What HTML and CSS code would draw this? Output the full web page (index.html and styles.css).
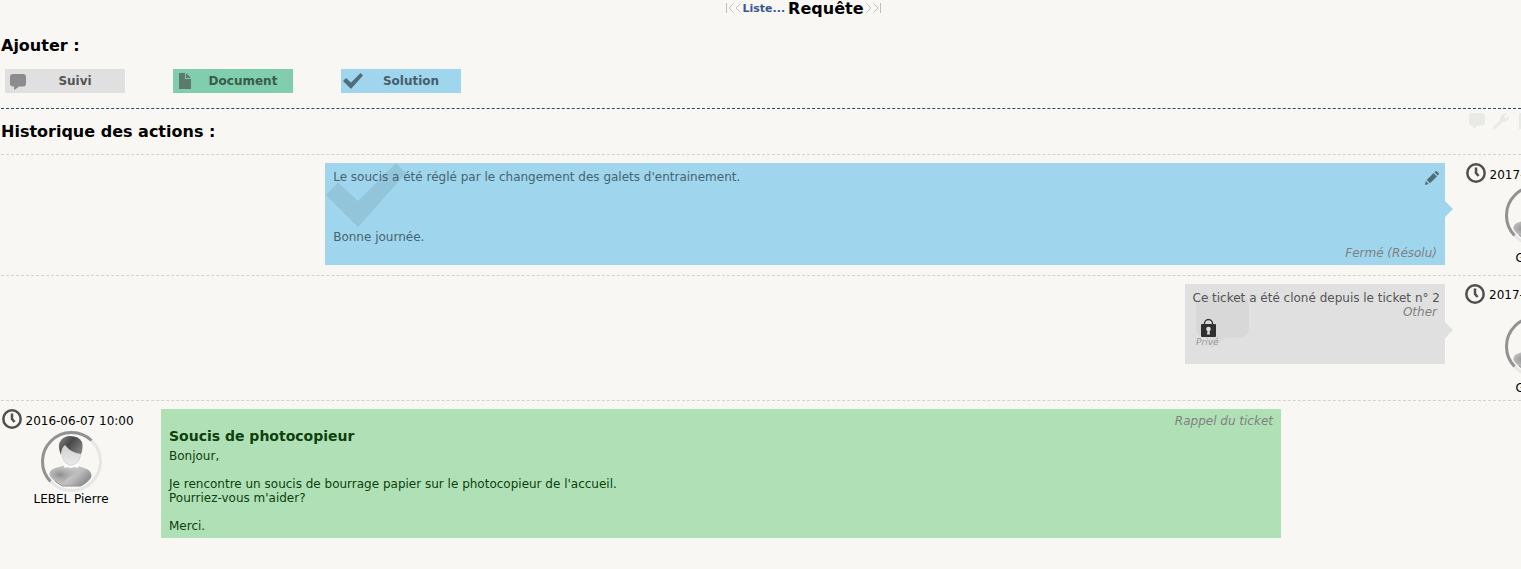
FILE: index.html
```html
<!DOCTYPE html>
<html lang="fr">
<head>
<meta charset="utf-8">
<title>Requête</title>
<link rel="stylesheet" href="styles.css">
</head>
<body>
<svg class="defs" width="0" height="0">
  <defs>
    <linearGradient id="body" x1="0" y1="0" x2="1" y2=".5"><stop offset="0" stop-color="#c8c8c8"/><stop offset=".35" stop-color="#dadada"/><stop offset=".75" stop-color="#b8b8b8"/><stop offset="1" stop-color="#909090"/></linearGradient>
    <linearGradient id="hair" x1="0" x2="1" y2=".6"><stop offset="0" stop-color="#8a8a8a"/><stop offset=".5" stop-color="#484848"/><stop offset="1" stop-color="#7c7c7c"/></linearGradient>
    <radialGradient id="shoulder" cx=".3" cy=".45" r=".7"><stop offset="0" stop-color="#8c8c8c"/><stop offset="1" stop-color="#c4c4c4" stop-opacity="0"/></radialGradient>
    <linearGradient id="face" x2="0" y2="1"><stop offset="0" stop-color="#cfcfcf"/><stop offset="1" stop-color="#ebebeb"/></linearGradient>
    <symbol id="clock" viewBox="0 0 20 20"><circle cx="10" cy="10" r="8.7" fill="none" stroke="#505050" stroke-width="2.5"/><path d="M10 4.500V10l2.600 3" fill="none" stroke="#505050" stroke-width="2.500"/></symbol>
    <symbol id="bubble" viewBox="0 0 16 16"><path d="M3 0h10q3 0 3 3v6.500q0 3-3 3H9L5 15.500q-1 .5-1-.8v-2.200H3q-3 0-3-3V3q0-3 3-3z"/></symbol>
    <symbol id="check" viewBox="0 0 80 64"><path d="M0 32 12 19.500 32 38 70 0l10 10L32 64z"/></symbol>
    <symbol id="file" viewBox="0 0 12 16"><path d="M0 0h6v6h6v10H0z"/><path d="M7 0l5 5H7z"/></symbol>
    <symbol id="avatar" viewBox="0 0 61 61">
      <circle cx="30.500" cy="30.500" r="29" fill="none" stroke="#e6e6e6" stroke-width="3"/>
      <path d="M50.500 9.500A29 29 0 0 0 9.500 50.500" fill="none" stroke="#929292" stroke-width="3"/>
      <path d="M23 34.500 13 37.500q-5 2-4.500 6.500 3 6 13 11h18q9-4 11-9.500 0-6-6-8L36 34.500z" fill="url(#body)"/>
      <path d="M13 37.500q-5 2-4.500 6.500 3 6 13 11 3-10 18-14l4-4-8-2.500H23z" fill="url(#shoulder)"/>
      <path d="M14 50q4 3 7.500 5h18q3-1.300 5-3" fill="none" stroke="#909090"/>
      <path d="M23 34l2-2h10l3 2-1 3-3.500-1-3.500 1-3.500-1-3 1z" fill="#fff"/>
      <path d="M20 15q8-4 20 3 1 15-11 16.500Q20 32 20 15z" fill="url(#face)" stroke="#c4c4c4" stroke-width=".6"/>
      <path d="M20 24q-4.500-10 .5-15.500Q24 5 29 5q9 0 12 6 1.500 6-1 12-10-1-16-9-4 3-4 10z" fill="url(#hair)"/>
    </symbol>
  </defs>
</svg>

<header class="pager">
  <svg class="pager-prev" width="16" height="10" viewBox="0 0 16 10"><path d="M.5 0v10M7.500.5 3 5l4.500 4.500M14.500.5 10 5l4.500 4.500"/></svg>
  <a class="pager-list">Liste...</a>
  <span class="pager-title">Requête</span>
  <svg class="pager-next" width="16" height="10" viewBox="0 0 16 10"><path d="M15.500 0v10M1.500.5 6 5 1.500 9.500M8.500.5 13 5 8.500 9.500"/></svg>
</header>

<section class="add">
  <h2 class="heading">Ajouter :</h2>
  <div class="buttons">
    <div class="btn btn-grey"><svg class="btn-icon" width="16" height="16"><use href="#bubble"/></svg><span class="btn-label">Suivi</span></div>
    <div class="btn btn-green"><svg class="btn-icon" width="16" height="16"><use href="#file"/></svg><span class="btn-label">Document</span></div>
    <div class="btn btn-blue"><svg class="btn-icon btn-check" width="20" height="16"><use href="#check"/></svg><span class="btn-label">Solution</span></div>
  </div>
</section>

<section class="history">
  <div class="history-head">
    <h2 class="heading">Historique des actions :</h2>
    <div class="filters">
      <svg width="16" height="16"><use href="#bubble"/></svg>
      <svg width="16" height="16" viewBox="0 0 16 16"><path d="M.5 13.500 7.500 6.500Q7 1.500 11 .3q1.500-.5 3 .2L11 3.500l.5 1.500 1.500.5 3-2.500q.5 3-2 5-2 1.500-4.500.8L2.500 15.800Q-.5 16 .5 13.500z"/></svg>
      <svg class="filter-file" width="12" height="16"><use href="#file"/></svg>
    </div>
  </div>

  <div class="row row-solution">
    <article class="card card-blue">
      <svg class="card-mark" width="80" height="64"><use href="#check"/></svg>
      <p class="line">Le soucis a été réglé par le changement des galets d'entrainement.</p>
      <p class="line signoff">Bonne journée.</p>
      <svg class="edit" width="14" height="14" viewBox="0 0 14 14"><path d="M0 14l.8-4L3.700 13zM1.700 9 8.600 2.100l3.300 3.300L5 12.300zM9.500 1.300l1-1q.8-.5 1.500.1L13.700 2q.5.8 0 1.500l-1 1z"/></svg>
      <span class="status">Fermé (Résolu)</span>
    </article>
    <aside class="who who-right">
      <div class="date"><svg width="20" height="20"><use href="#clock"/></svg><span>2017-</span></div>
      <svg class="avatar" width="61" height="61"><use href="#avatar"/></svg>
      <span class="name">G</span>
    </aside>
  </div>

  <div class="row row-followup">
    <article class="card card-grey">
      <svg class="bubble-mark" width="53" height="53"><use href="#bubble"/></svg>
      <p class="line">Ce ticket a été cloné depuis le ticket n° 2</p>
      <span class="origin">Other</span>
      <div class="private">
        <svg width="15" height="18" viewBox="0 0 15 18"><path d="M3.500 6V4.500a4 4 0 0 1 8 0V6" fill="none" stroke="#303030" stroke-width="1.300"/><rect y="5" width="15" height="13" rx="1" fill="#303030"/><circle cx="7.500" cy="10" r="2.300" fill="#e0e0e0"/><path d="M6.800 10h1.400l.8 5.500H6z" fill="#e0e0e0"/></svg>
        <span>Privé</span>
      </div>
    </article>
    <aside class="who who-right">
      <div class="date"><svg width="20" height="20"><use href="#clock"/></svg><span>2017-</span></div>
      <svg class="avatar" width="61" height="61"><use href="#avatar"/></svg>
      <span class="name">G</span>
    </aside>
  </div>

  <div class="row row-ticket">
    <aside class="who">
      <div class="date"><svg width="20" height="20"><use href="#clock"/></svg><span>2016-06-07 10:00</span></div>
      <svg class="avatar" width="61" height="61"><use href="#avatar"/></svg>
      <span class="name">LEBEL Pierre</span>
    </aside>
    <article class="card card-green">
      <span class="reminder">Rappel du ticket</span>
      <h3 class="subject">Soucis de photocopieur</h3>
      <p class="message">Bonjour,<br><br>Je rencontre un soucis de bourrage papier sur le photocopieur de l'accueil.<br>Pourriez-vous m'aider?<br><br>Merci.</p>
    </article>
  </div>
</section>
</body>
</html>
```

FILE: styles.css
```css
* { box-sizing: border-box; }
html { overflow: hidden; }
body {
  margin: 0;
  height: 569px;
  overflow: hidden;
  background: #f8f7f3;
  color: #000;
  font: 12px/14px "DejaVu Sans", sans-serif;
}
svg { display: block; flex: none; }
h2, h3, p { margin: 0; }
.defs { position: absolute; }

.pager {
  display: flex;
  justify-content: center;
  align-items: center;
  height: 17px;
  padding-left: 86px;
}
.pager svg { margin-top: -1px; fill: none; stroke: #c0c0c0; }
.pager-list { margin-left: 1px; color: #3a5693; font-size: 11px; font-weight: bold; }
.pager-title { margin: 0 2px 0 3px; font-size: 16px; font-weight: bold; line-height: 17px; }

.heading { font-size: 16px; line-height: 18px; font-weight: bold; }
.add {
  height: 92px;
  margin-left: 1px;
  padding-top: 20px;
  border-bottom: 1px dashed #2d4a70;
}
.buttons { display: flex; gap: 48px; padding: 14px 0 0 4px; }
.btn {
  display: flex;
  align-items: center;
  width: 120px;
  height: 24px;
  font-weight: bold;
}
.btn-icon { margin-left: 5px; fill: #8c8c8c; }
.btn-check { margin-right: -1px; }
.btn-blue .btn-check { margin-left: 2px; }
.btn-label { flex: 1; padding-right: 1px; text-align: center; }
.btn-grey { background: #e0e0e0; color: #545454; }
.btn-grey .btn-icon { margin-top: 1px; }
.btn-green { background: #80cead; color: #385c4c; }
.btn-green .btn-icon { margin-left: 4px; margin-right: 1px; fill: #5d7a6e; }
.btn-blue { background: #9fd6ed; color: #455f6a; }
.btn-blue .btn-icon { fill: #506e7a; }

.history { margin-left: 1px; }
.history-head {
  display: flex;
  justify-content: space-between;
  height: 46px;
  padding-top: 14px;
  border-bottom: 1px dashed #d2d2ce;
}
.filters { display: flex; gap: 8px; margin: -10px -10px 0 0; fill: #e9e9e6; }
.filter-file { margin-left: 2px; }

.row { display: flex; align-items: flex-start; border-bottom: 1px dashed #d2d2ce; }
.row-solution { height: 121px; padding: 8px 0 0 324px; }
.row-followup { height: 125px; padding: 8px 0 0 1184px; }
.row-ticket { border: 0; padding-top: 8px; }

.card { position: relative; flex: none; width: 1120px; }
.card-blue { height: 102px; padding: 7px 8px; background: #9fd6ed; color: #47636f; }
.card-grey { width: 260px; height: 80px; padding: 7px 5px 0 7.5px; background: #e0e0e0; color: #545454; }
.card-green { height: 129px; margin-left: 27px; padding: 5px 8px; background: #b0e0b6; color: #0d400d; }
.card-blue::after, .card-grey::after {
  content: "";
  position: absolute;
  left: 100%;
  top: 38px;
  border: 8px solid transparent;
  border-right: 0;
  border-left-color: #9fd6ed;
}
.card-grey::after { border-left-color: #e0e0e0; }
.line { position: relative; white-space: nowrap; }
.card-blue .line { padding-left: .2px; }
.signoff { margin-top: 46px; }
.card-mark { position: absolute; left: 1px; top: 0; fill: #92c5da; }
.bubble-mark { position: absolute; left: 10.5px; top: 12px; fill: #d8d8d8; }
.edit { position: absolute; right: 6px; top: 8px; fill: #506e7a; }
.status { position: absolute; right: 8px; bottom: 5px; color: #808080; font-style: italic; }
.origin { display: block; margin-right: 3px; text-align: right; color: #808080; font-style: italic; }
.private { position: absolute; left: 11px; top: 35px; color: #999; font-size: 9px; line-height: 10px; font-style: italic; }
.private svg { margin-left: 5px; }
.reminder { display: block; text-align: right; color: #808080; font-style: italic; }
.subject { font-size: 14px; line-height: 17px; }
.message { padding-top: 4px; }

.who { display: flex; flex-direction: column; flex: none; width: 133px; }
.who-right { width: 56px; overflow: hidden; margin-left: 20px; }
.date { display: flex; gap: 3.5px; padding-left: 1px; white-space: nowrap; }
.date span { padding-top: 5px; }
.who-right .date { gap: 4px; padding-left: .6px; }
.avatar { margin: 2px 0 0 40px; }
.name { width: 140px; text-align: center; }
.who-right .name { padding-left: 50.5px; text-align: left; }
.row-followup .who-right .date { padding-left: 0; }
.row-followup .date span { padding-top: 4px; }
.row-followup .avatar { margin-top: 12px; }
.row-followup .name { margin-top: 4px; }
.row-solution .name { margin-top: 5px; }
```
